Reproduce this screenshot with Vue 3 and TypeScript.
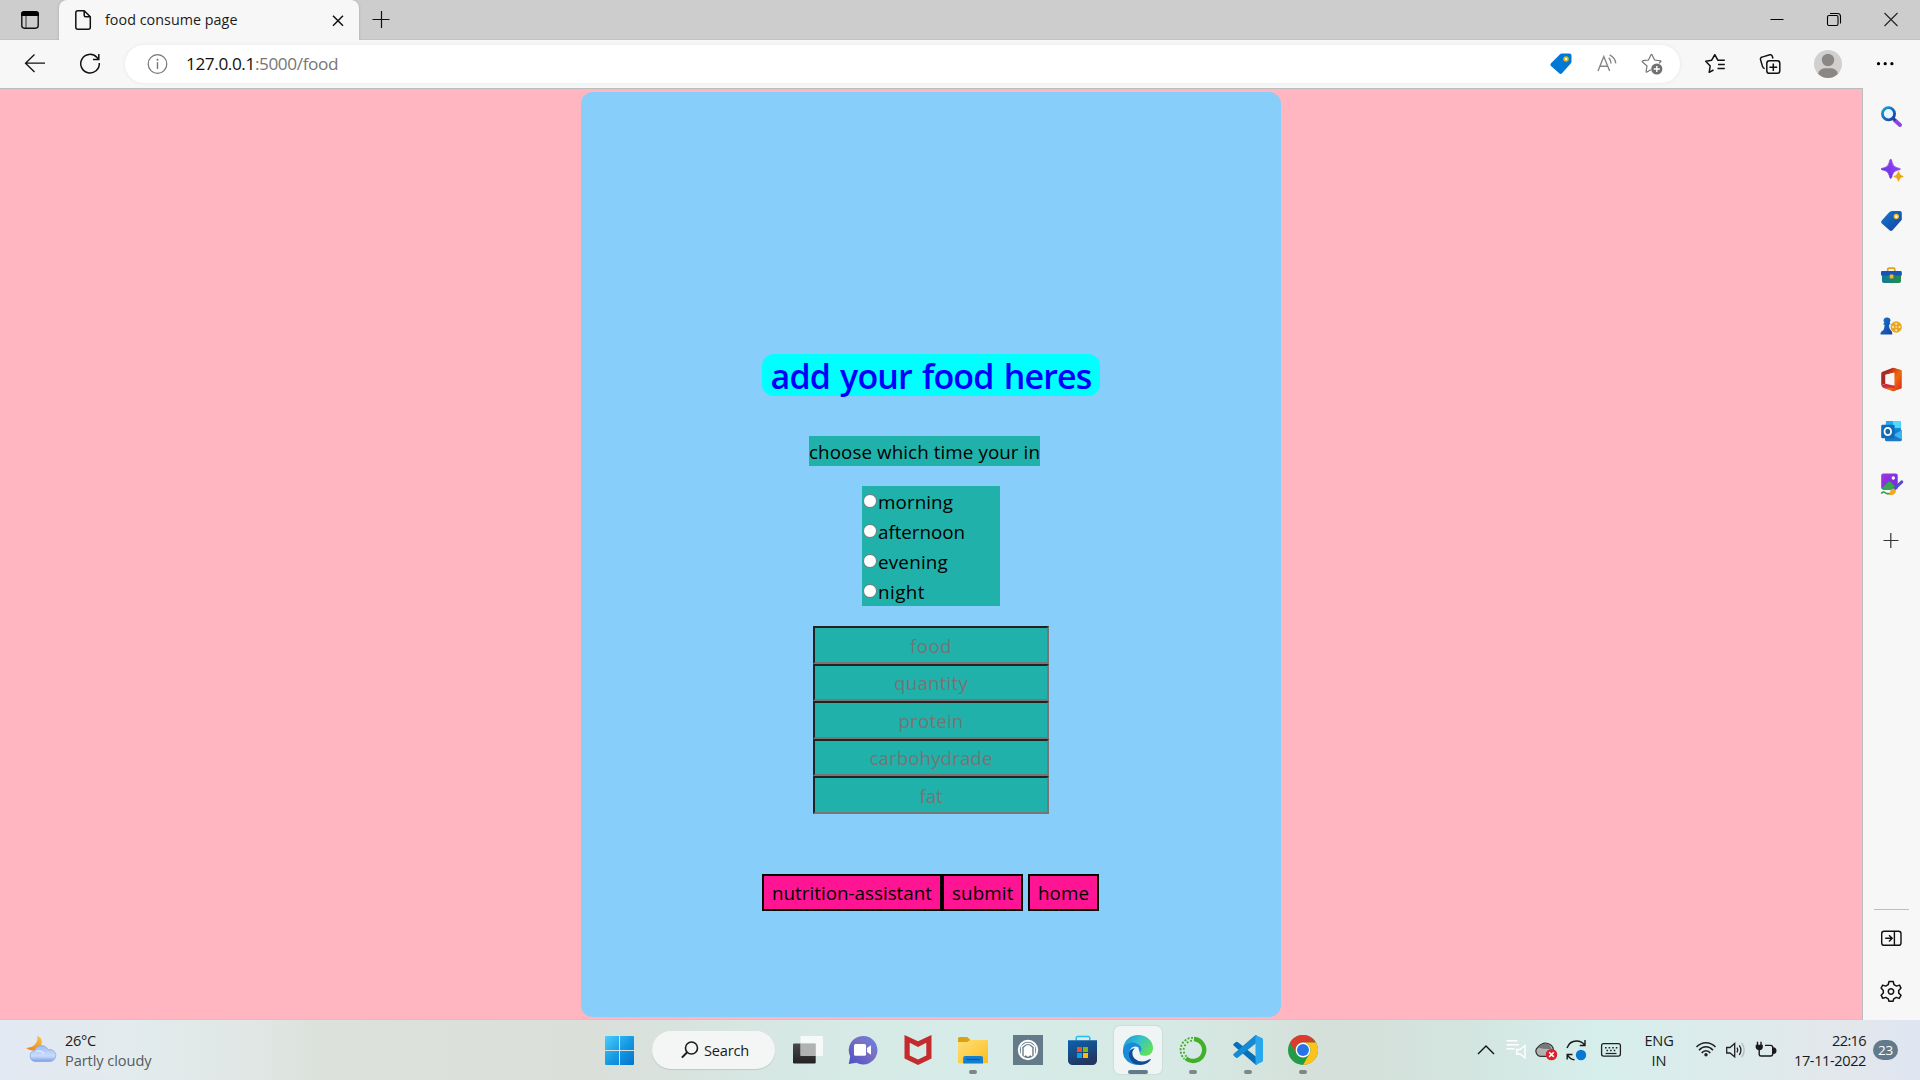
<script setup lang="ts">
import type { Directive } from 'vue'

interface TimeOption { label: string; width: number }
interface Field { name: string; width: number }

const times: TimeOption[] = [
  { label: 'morning', width: 75 },
  { label: 'afternoon', width: 87 },
  { label: 'evening', width: 70 },
  { label: 'night', width: 47 },
]

const fields: Field[] = [
  { name: 'food', width: 42 },
  { name: 'quantity', width: 74 },
  { name: 'protein', width: 65 },
  { name: 'carbohydrade', width: 123 },
  { name: 'fat', width: 23 },
]

// Tracks a label so that its text occupies the given width in pixels.
const vFit: Directive<HTMLElement, number> = {
  mounted(el, binding) {
    const text = el instanceof HTMLInputElement ? el.placeholder : (el.textContent ?? '').trim()
    const ctx = document.createElement('canvas').getContext('2d')
    if (!ctx || !text.length) return
    const style = getComputedStyle(el)
    ctx.font = `${style.fontWeight} ${style.fontSize} ${style.fontFamily}`
    const spacing = (binding.value - ctx.measureText(text).width) / text.length
    el.style.letterSpacing = `${spacing.toFixed(3)}px`
  },
}
</script>

<template>
  <div class="screen">
    <header class="tabs">
      <svg class="workspace" width="40" height="40" viewBox="-20 -20 40 40"><rect x="-8.2" y="-7.8" width="16.4" height="16" rx="2.6" fill="none" stroke="#111" stroke-width="1.4" /><path d="M-9-4V-6a3 3 0 0 1 3-3H6a3 3 0 0 1 3 3v2z" fill="#000" /><path d="M-4-4V8" stroke="#333" stroke-width="1" /></svg>
      <div class="tab">
        <svg width="20" height="40" viewBox="-10 -20 20 40" fill="none" stroke="#111" stroke-width="1.5" stroke-linejoin="round"><path d="M-5.2-9.3H1.2L7.3-3.2V7.3a2 2 0 0 1-2 2H-5.2a2 2 0 0 1-2-2V-7.3a2 2 0 0 1 2-2zM1.2-9V-4.7a1.5 1.5 0 0 0 1.5 1.5H7" /></svg>
        <span class="tab-title"><span v-fit="132.5">food consume page</span></span>
        <svg width="20" height="40" viewBox="-10 -20 20 40" stroke="#111" stroke-width="1.5"><path d="M-5-4.2L5 5.8M5-4.2L-5 5.8" /></svg>
      </div>
      <svg class="new-tab" width="40" height="40" viewBox="-20 -20 40 40" stroke="#111" stroke-width="1.2"><path d="M-8.5-.5H8.5M.5-9V8" /></svg>
      <svg class="win-min" width="40" height="40" viewBox="-20 -20 40 40"><path d="M-6.5-.5H6.5" stroke="#000" stroke-width="1" /></svg>
      <svg class="win-btn" width="40" height="40" viewBox="-20 -20 40 40" fill="none" stroke="#000" stroke-width="1.1"><rect x="-6.5" y="-4.5" width="10.5" height="10" rx="1.5" /><path d="M-4-6.5H3.5a3 3 0 0 1 3 3V3.5" /></svg>
      <svg class="win-btn" width="40" height="40" viewBox="-20 -20 40 40" stroke="#222" stroke-width="1.1"><path d="M-6.5-7L6.5 6M6.5-7L-6.5 6" /></svg>
    </header>

    <nav class="toolbar">
      <svg width="40" height="40" viewBox="-20 -20 40 40" fill="none" stroke="#111" stroke-width="1.3"><path d="M10-.8H-9.5M-.5-9.5L-9.5-.8-.5 8" /></svg>
      <svg class="reload" width="40" height="40" viewBox="-20 -20 40 40" fill="none" stroke="#111" stroke-width="1.5"><path d="M9.3-1A9.3 9.3 0 1 1 6.8-6.7L8.6-4.6M8.8-10V-4.6H3" /></svg>
      <div class="omnibox">
        <svg class="info" width="24" height="24" viewBox="-12.5 -12 24 24"><circle r="9.3" fill="none" stroke="#757575" stroke-width="1.2" /><path d="M0-1.8V5" stroke="#757575" stroke-width="1.4" /><circle cy="-4.3" r="1" fill="#757575" /></svg>
        <span class="url" v-fit="152">127.0.0.1<i>:5000/food</i></span>
        <svg class="o-tag" width="30" height="30" viewBox="-15 -15 30 30"><path d="M1-10.5H8.5a2 2 0 0 1 2 2V-2.5a3 3 0 0 1-1 2.3L1 9.3a2 2 0 0 1-2.8 0L-10 2a2 2 0 0 1 0-2.8L-1.2-9.6A3 3 0 0 1 1-10.5z" fill="#0078d4" /><circle cx="5" cy="-5" r="2" fill="#fff" stroke="#f0b400" stroke-width="1.5" /></svg>
        <svg class="o-read" width="30" height="30" viewBox="-15 -15 30 30" fill="none" stroke="#858585" stroke-width="1.4"><path d="M-9 7L-3.2-7.5 2.7 7M-7 2.2H.8M1.8-6.2Q4-3.6 4-.6M2.7-9.2Q8.8-5.8 8.6-.6" /></svg>
        <svg class="o-star" width="30" height="30" viewBox="-15 -15 30 30"><path d="M-5.5 8.2Q-6 8.3-5.9 7.5L-5 2-9.8-2.3Q-10-3-9-3.3L-3.5-4-1-9.2Q-.5-10 0-9.2L2.6-4 8.5-3.1Q9.3-2.8 8.6-2.2L7-.6M-5.5 8.2L-1 5.8" fill="none" stroke="#757575" stroke-width="1.2" /><circle cx="4.8" cy="5" r="5.6" fill="#707070" /><path d="M1.7 5H7.9M4.8 1.9V8.1" stroke="#fff" stroke-width="1.4" /></svg>
      </div>
      <svg class="fav" width="40" height="40" viewBox="-20 -20 40 40" fill="none" stroke="#111" stroke-width="1.5" stroke-linejoin="round"><path d="M-1.5 6L-5.8 8.3-4.8 2-9.3-2.8-3.3-3.8-.2-9.3 2.8-3.8H9.8M3 .5H9.8M2.5 4.5H9.8" /></svg>
      <svg class="coll" width="40" height="40" viewBox="-20 -20 40 40" fill="none" stroke="#111" stroke-width="1.5"><rect x="-3.2" y="-3.2" width="13" height="12.5" rx="2.6" /><path d="M3.3 -.5V7M-.6 3.2H7.2M3-5.5L2.2-8a2 2 0 0 0-2.4-1.2L-8-6.9A2 2 0 0 0-9.5-4.4L-7.4 2.6Q-6.8 4.5-5.3 4.6" /></svg>
      <svg class="avatar" width="40" height="40" viewBox="-20 -20 40 40"><circle r="14" fill="#d2d0ce" /><circle cy="-4" r="6.2" fill="#8a8785" /><path d="M-10 9.7Q-8 4.4-3.5 4.3H3.5Q8 4.4 10 9.7A14 14 0 0 1-10 9.7z" fill="#8a8785" /></svg>
      <svg class="dots" width="40" height="40" viewBox="-20 -20 40 40"><circle cx="-6.5" cy="-.3" r="1.6" /><circle cx=".2" cy="-.3" r="1.6" /><circle cx="6.9" cy="-.3" r="1.6" /></svg>
    </nav>

    <div class="body">
      <main class="page">
        <form class="card" @submit.prevent>
          <h1><span v-fit="315">add your food heres</span></h1>
          <p class="prompt"><span v-fit="231">choose which time your in</span></p>
          <div class="times">
            <label v-for="t in times" :key="t.label"><input type="radio" name="time" /><span v-fit="t.width">{{ t.label }}</span></label>
          </div>
          <div class="fields">
            <input v-for="f in fields" :key="f.name" v-fit="f.width" type="text" :placeholder="f.name" />
          </div>
          <div class="actions">
            <button type="button" class="b-nutrition"><span v-fit="160">nutrition-assistant</span></button>
            <button type="submit" class="b-submit"><span v-fit="61.5">submit</span></button>
            <button type="button" class="b-home"><span v-fit="51">home</span></button>
          </div>
        </form>
      </main>

      <aside class="sidebar">
        <svg width="40" height="40" viewBox="-20 -20 40 40"><path d="M3.5 4L9 9" stroke="#8a45e0" stroke-width="4" stroke-linecap="round" /><path d="M2 2L4.5 4.5" stroke="#2a3b90" stroke-width="2" /><circle cx="-2.5" cy="-2.3" r="6.1" fill="#e8f6fd" stroke="url(#g-mag)" stroke-width="2.8" /></svg>
        <svg width="40" height="40" viewBox="-20 -20 40 40"><path d="M-.3-10Q.7-9.6 1.2-6.5 2-1.8 6.5-1.1 9.2-.6 9.5 0 9 .8 6.5 1.2 2 2 1.2 6.3.7 9.3-.2 9.5-1.2 9.2-1.8 6.3-2.6 2-7 1.2-9.7.8-10 0-9.7-.7-7-1.1-2.6-1.8-1.8-6.5-1.2-9.7-.3-10z" fill="url(#g-spark)" stroke="url(#g-spark)" stroke-width=".8" /><path d="M7.5 2.8Q8.3 6.8 12 7.5 8.3 8.3 7.5 12 6.8 8.3 3 7.5 6.8 6.8 7.5 2.8z" fill="#eba914" stroke="#eba914" stroke-width="1.2" stroke-linejoin="round" /></svg>
        <svg width="40" height="40" viewBox="-20 -20 40 40"><path d="M1-10H8.8a2 2 0 0 1 2 2V-1.2L1.5 9.2a2.2 2.2 0 0 1-3 0L-9.4 2.3a2 2 0 0 1 0-2.6L-2-8.5Q-.8-10 1-10z" fill="url(#g-tag)" /><circle cx="5.3" cy="-4.5" r="2" fill="#fff" stroke="#f3bb20" stroke-width="1.4" /></svg>
        <svg width="40" height="40" viewBox="-20 -21 40 40"><path d="M-3.3-3V-5.5a1.3 1.3 0 0 1 1.3-1.3H2.5a1.3 1.3 0 0 1 1.3 1.3V-3" fill="none" stroke="#e0a02a" stroke-width="1.8" /><path d="M-9 0H10V6a2 2 0 0 1-2 2H-7a2 2 0 0 1-2-2z" fill="url(#g-box)" /><path d="M-8.5-4H9.5a1.3 1.3 0 0 1 1.3 1.3V.5H-10V-2.7A1.3 1.3 0 0 1-8.5-4z" fill="#1654b8" /><rect x="-1.3" y="-.5" width="3.7" height="4" rx=".8" fill="#f3b435" /></svg>
        <svg width="40" height="40" viewBox="-20 -20 40 40"><circle cx="5.2" cy="1" r="5.7" fill="#e8a621" /><g fill="#fff1c0"><circle cx="5.2" cy="-2.3" r="1" /><circle cx="5.2" cy="4.3" r="1" /><circle cx="2" cy="1" r="1" /><circle cx="8.5" cy="1" r="1" /><circle cx="5.2" cy="1" r=".8" /></g><path d="M-4-8.5a3 3 0 0 1 2.7 5L-.5-1.5H-2Q-2 3 0 4.5 1.5 5.5 1.3 8.5H-10.5Q-10.8 5.5-8 4.5-6.5 3-6.5-1.5H-8L-6.7-3.5A3 3 0 0 1-4-8.5z" fill="url(#g-tag)" /></svg>
        <svg width="40" height="40" viewBox="-20 -20.8 40 40"><path d="M2-12L10.5-9.5V8.5L2 11.5z" fill="#e24a10" /><path d="M2-12L-8.5-8a2 2 0 0 0-1.3 2V5.5L-5.5 4V-5L3-7.2z" fill="#a62b24" /><path d="M2-12L10.5-9.5V8.5L2 11.5-8 7.5 3.5 6V-7.2L-5.5-5z" fill="url(#g-off)" fill-rule="evenodd" /><path d="M-5.5-5L3.5-7.2V6L-5.5 4z" fill="#f9f5f5" /><path d="M-9.8 5.8L-5.5 4 3.5 6V8L-7.5 7.5 2 11.5-8 8z" fill="#d12a3e" /></svg>
        <svg width="40" height="40" viewBox="-20 -20 40 40"><path d="M-5-10H8.5a1.3 1.3 0 0 1 1.3 1.3V3H-6z" fill="#28a8ea" /><path d="M2-10H9.8V-3H2z" fill="#50d9ff" /><path d="M2-3H9.8V4H2z" fill="#1688d4" /><path d="M-6 1L11-1V8.5a1.7 1.7 0 0 1-1.7 1.7H-4.5A1.5 1.5 0 0 1-6 8.7z" fill="#1a7ac8" /><path d="M11-1V8.5L2 4z" fill="#39b7f1" /><rect x="-9.8" y="-6.3" width="13.4" height="13.6" rx="1.4" fill="#0f6cbd" /><ellipse cx="-3.2" cy=".5" rx="3.3" ry="3.7" fill="none" stroke="#fff" stroke-width="1.8" /></svg>
        <svg width="40" height="40" viewBox="-20 -20 40 40"><rect x="-9.8" y="-10.5" width="16.5" height="16" rx="2" fill="url(#g-pic)" /><path d="M-9 4L-3-1.8a2 2 0 0 1 2.8 0L6 4.5 4 6H-8z" fill="#35a851" /><circle cx="2.3" cy="-6" r="1.7" fill="#fff" /><path d="M-9.8 9.5Q-7.5 7-6 8.5T-3 9.5L0 10" fill="none" stroke="#2b9a48" stroke-width="1.5" /><path d="M2.8 5.3L10.8-2.2" stroke="#5748d8" stroke-width="3" stroke-linecap="round" /><path d="M-1.5 10Q-.8 4.5 3 4.5L5 6.5Q5 11-1.5 11.3z" fill="#efa925" /></svg>
        <svg class="plus" width="40" height="40" viewBox="-20 -20 40 40" stroke="#333" stroke-width="1.2"><path d="M-7.5.5H7.5M-.2-7V8" /></svg>
        <div class="rule"></div>
        <svg class="panel" width="40" height="40" viewBox="-20 -20 40 40" fill="none" stroke="#111" stroke-width="1.4"><rect x="-9.3" y="-6.7" width="19.3" height="14" rx="2.4" /><path d="M3.4-6.7V7.3M-5.8.3H.5M-2-2.8L1.2.3-2 3.4" /></svg>
        <svg class="gear" width="40" height="40" viewBox="-20 -20 40 40" fill="none" stroke="#111" stroke-width="1.5" stroke-linejoin="round"><path d="M-2-9.5H2.2L3-6.3 5.5-4.9 8.5-5.9 10-2.9 7.7-.5V2.1L10 4.3 8.2 7.4 5.2 6.4 2.8 7.8 2 10.3H-2L-2.8 7.8-5.2 6.4-8.2 7.3-9.9 4.2-7.7 2V-.5L-9.9-3-8.3-5.9-5.3-4.9-2.8-6.3z" /><circle cx="0" cy=".5" r="2.7" /></svg>
      </aside>
    </div>

    <footer class="taskbar">
      <svg class="weather" width="32" height="32" viewBox="-16 -16 32 32"><path d="M-4-13.5Q4-9-.5-3-6 5-15-1-8-1.5-5.3-5.5-2.5-9.5-4-13.5z" fill="url(#g-moon)" /><path d="M-6 12.5a5.6 5.6 0 0 1-.5-11Q-4.2-3.5.7-3.5 5-3.5 7 .8A6 6 0 1 1 8.5 12.5z" fill="url(#g-cloud)" stroke="#82a2e2" stroke-width=".7" /><path d="M-5 2.5Q0 .5 3 5" fill="none" stroke="#dfebff" stroke-width="1.4" /></svg>
      <div class="weather-text"><b v-fit="31">26°C</b><span v-fit="86.5">Partly cloudy</span></div>

      <svg class="start" width="30" height="30" viewBox="0 0 30 30" fill="url(#g-win)"><path d="M0 1a1 1 0 0 1 1-1H14V14H0zM15 0H28a1 1 0 0 1 1 1V14H15zM0 15H14V29H1a1 1 0 0 1-1-1zM15 15H29V28a1 1 0 0 1-1 1H15z" /></svg>
      <div class="search">
        <svg width="18" height="18" viewBox="0 0 18 18" fill="none" stroke="#1c1c1c" stroke-width="1.6"><circle cx="10.5" cy="7" r="6" /><path d="M6.2 11.3L.9 16.6" stroke-width="2" /></svg>
        <span v-fit="45">Search</span>
      </div>

      <div class="apps">
        <div class="app"><svg width="40" height="40" viewBox="-20 -20 40 40"><rect x="-15" y="-6.5" width="22.7" height="20" rx="1.2" fill="url(#g-dark)" /><rect x="-7.5" y="-14" width="22.5" height="20" rx="1" fill="#fff" opacity=".75" /><path d="M-7.5-6.5H7.7V6H-7.5z" fill="#a9abaa" opacity=".8" /></svg></div>
        <div class="app"><svg width="40" height="40" viewBox="-20 -20 40 40"><path d="M0-14a14.2 14.2 0 1 1-6.5 26.7L-14.3 14-12.8 6.5A14.2 14.2 0 0 1 0-14z" fill="url(#g-chat)" /><rect x="-9" y="-6" width="12" height="11.8" rx="1.5" fill="#fff" /><path d="M4-2L8-4.8V4.8L4 2z" fill="#fff" /></svg></div>
        <div class="app"><svg width="40" height="40" viewBox="-20 -20 40 40"><path d="M-13.5-15L0-8.8 13.5-15V8.5L0 15-13.5 8.5zM-8.3-7.3V5.5L0 9.5 8.3 5.5V-7.3L0-3z" fill="#c42b2c" fill-rule="evenodd" /></svg></div>
        <div class="app"><svg width="40" height="40" viewBox="-20 -20 40 40"><path d="M-15-11.5A1.5 1.5 0 0 1-13.5-13H-5.8L-2.6-10V-5H-15z" fill="#dda010" /><path d="M-15-8H-6L-2.5-10H13.8A1.2 1.2 0 0 1 15-8.8V12.3a1 1 0 0 1-1 1H-15z" fill="url(#g-fold)" /><path d="M-9.8 13.4V8a2 2 0 0 1 2-2H8a2 2 0 0 1 2 2V13.4z" fill="#137fd0" /><path d="M-6.5 9.5H6.5" stroke="#07579c" stroke-width="1.2" /></svg><i class="run"></i></div>
        <div class="app"><svg width="40" height="40" viewBox="-20 -20 40 40"><rect x="-15" y="-15" width="30" height="30" fill="#627a89" /><circle r="9.2" fill="none" stroke="#fff" stroke-width="2" /><path d="M-6.4 6.5V-3.3L-2-6.6H2L6.4-3.3V6.5" fill="none" stroke="#fff" stroke-width="1.5" /><path d="M-4.3-2.2L-1.5-4.8H1.5L4.3-2.2V6.8L2.2 5.2 0 7-2.2 5.2-4.3 6.8z" fill="#fff" /></svg></div>
        <div class="app"><svg width="40" height="40" viewBox="-20 -20 40 40"><path d="M-6.8-9.5V-12a1.5 1.5 0 0 1 1.5-1.5H5.3A1.5 1.5 0 0 1 6.8-12V-9.5" fill="none" stroke="#23bdf2" stroke-width="1.5" /><path d="M-15-9.8H14V10.5A4.5 4.5 0 0 1 9.5 15H-10.5A4.5 4.5 0 0 1-15 10.5z" fill="url(#g-store)" /><path d="M-6-3H-1V2H-6z" fill="#f25022" /><path d="M0-3H5V2H0z" fill="#7fba00" /><path d="M-6 3H-1V8H-6z" fill="#00a4ef" /><path d="M0 3H5V8H0z" fill="#ffb900" /></svg></div>
        <div class="app active"><svg width="40" height="40" viewBox="-20 -20 40 40"><path d="M-15-1C-14-10-7.5-15 0-15 9-15 15-9 15-2 15 3 11.5 5.8 7 5.8 3 5.8.8 4.3 2 2.5 4.5-1 2-6.5-4-7-10-7.5-14-4-15-1z" fill="url(#g-edge)" /><path d="M-15 0C-14.5-5-9.5-7.8-5-7.5 0-7.2 3.5-4 3.5-.5 3.4 1.2 2 1.8 2 3.2L.2-2.8Q-5-5-8-.3-10 5-5 11.5 0 15.5 2 15-9 15.5-14 7-15.5 3-15 0z" fill="#168bd9" /><path d="M-3.2-2Q-8 3-3.5 8.5 2 13.5 9.5 10.2 12.3 8.8 12.7 9 13.2 9.3 12 10.7 8 15 1.5 15-7 14.5-9 6-10-1-3.2-2z" fill="#114d97" /></svg><i class="run"></i></div>
        <div class="app"><svg width="40" height="40" viewBox="-20 -20 40 40" fill="none" stroke="#43b02a"><path d="M1-11A11 11 0 1 1-7 8.3" stroke-width="4.4" /><path d="M0-12.2A12.2 12.2 0 0 0-8.5 9" stroke-width="1.8" stroke-dasharray="2 1.5" /><path d="M-1-9.3A9.3 9.3 0 0 0-6.3 6.8" stroke-width="1.8" stroke-dasharray="1.8 2" /></svg><i class="run"></i></div>
        <div class="app"><svg width="40" height="40" viewBox="-20 -20 40 40"><path d="M-14-6.5L-12-8Q-11-8.5-10-7.7L9 7.5V14.5L8 15-14.5-4.5Q-15.3-5.5-14-6.5z" fill="#0870b8" /><path d="M-14 6L-12 7.7Q-11 8.2-10 7.5L9-7.5V-14.5L7.5-15-14.5 4Q-15.3 5-14 6z" fill="#168bd1" /><path d="M7.5-15L14-12a1.8 1.8 0 0 1 1 1.6V10.2A1.8 1.8 0 0 1 14 12L7.5 15z" fill="#29a8ee" /></svg><i class="run"></i></div>
        <div class="app"><svg width="40" height="40" viewBox="-20 -20 40 40"><circle r="15" fill="#249b47" /><path d="M-13-7.5A15 15 0 0 1 13-7.5H0A7.5 7.5 0 0 0-6.5 3.8z" fill="#de3b2f" /><path d="M13-7.5A15 15 0 0 1 0 15L6.5 3.8A7.5 7.5 0 0 0 0-7.5z" fill="#fcc31a" /><circle r="7.4" fill="#fff" /><circle r="6" fill="#2a72e8" /></svg><i class="run"></i></div>
      </div>

      <div class="tray">
        <svg width="30" height="40" viewBox="-15 -20 30 40" fill="none" stroke="#111" stroke-width="1.4"><path d="M-8 4L0-4 8 4" /></svg>
        <svg width="30" height="40" viewBox="-15 -20 30 40" fill="none" stroke="#fff" stroke-width="1.4"><path d="M-9.5-9.3H1.5M-9.5-5.3H3M-9.5-1.3H-1.5M.8-.5H4L9-4.5V7.8L4 4H.8z" /></svg>
        <svg width="30" height="40" viewBox="-15 -20 30 40"><path d="M-5 6.3A5 5 0 0 1-8.3-2.5Q-3.5-8 1.8-6.5 7-5 7.5 0L3 6.3z" fill="#b0b2b3" stroke="#333" stroke-width="1.2" /><path d="M-8-2.5Q-2-8 3-5.8L5.5-1Q-2-.5-8-2.5z" fill="#777" /><circle cx="5.5" cy="4.6" r="5.7" fill="#d8232f" /><path d="M3.2 2.3L7.8 6.9M7.8 2.3L3.2 6.9" stroke="#fff" stroke-width="1.6" /></svg>
        <svg width="30" height="40" viewBox="-15 -20 30 40" fill="none" stroke="#1a1a1a" stroke-width="1.4"><path d="M-9-2Q-6.5-9 .5-9 6-9 9-4.5M9-10V-4.5H3.8M-8.8 9.5V4.5H-3.5M-8.8 4.7Q-6 9.6-1.5 9.8" /><circle cx="5" cy="5" r="5.2" fill="#0878d4" stroke="none" /></svg>
        <svg class="keyb" width="30" height="40" viewBox="-15 -20 30 40" fill="none" stroke="#222" stroke-width="1.3"><rect x="-9.4" y="-6.4" width="18.8" height="12.5" rx="2" /><path d="M-6-2.3H7" stroke-dasharray="1.6 2" stroke-width="1.5" /><path d="M-4.5.6H6" stroke-dasharray="1.6 2" stroke-width="1.5" /><path d="M-5.5 3.5H5.5" stroke-width="1.2" /></svg>
        <div class="lang"><span v-fit="29">ENG</span><span v-fit="15">IN</span></div>
        <svg class="wifi" width="30" height="40" viewBox="-15 -20 30 40" fill="none" stroke="#222" stroke-width="1.5"><path d="M-9.5-3Q-5.5-7.3 0-7.3T9.5-3M-7 .2Q-4-3.3 0-3.3T7 .2M-4.3 3Q-2.7.7 0 .7T4.3 3" /><circle cy="4.7" r="1.7" fill="#222" stroke="none" /></svg>
        <svg width="30" height="40" viewBox="-15 -20 30 40" fill="none" stroke="#222" stroke-width="1.3"><path d="M-9.3-2.5H-6L-1.3-6.5V6.8L-6 3H-9.3z" /><path d="M1-2.3Q2.5 0 1 2.5M3.3-4.7Q6.5 0 3.3 5" /><path d="M5.8-7Q10.6 0 5.8 7.2" stroke="#aebcbc" /></svg>
        <svg width="32" height="40" viewBox="-15 -20 32 40" fill="none" stroke="#1a1a1a" stroke-width="1.4"><path d="M-8.5-8.2V-4M-5-8.2V-4" /><path d="M-10.3-5.2H-3.2V-2.5Q-3.5 0-6.7.3-10-.2-10.3-2.5z" fill="#1a1a1a" stroke="none" /><path d="M-6.8 0V4.5Q-6.8 6-5 6H4.5Q6.7 6 6.7 3.8V-2.5Q6.7-4.6 4.5-4.6H-1" /><path d="M7-2Q9.8-1.8 9.8.7T7 3.3z" fill="#1a1a1a" /></svg>
        <div class="clock"><span v-fit="34">22:16</span><span v-fit="72">17-11-2022</span></div>
        <div class="count"><span v-fit="15">23</span></div>
      </div>
    </footer>

    <svg class="defs" width="0" height="0">
      <defs>
        <linearGradient id="g-mag" x1="0" y1="0" x2="1" y2="1"><stop stop-color="#1aa0e0" /><stop offset="1" stop-color="#153f9c" /></linearGradient>
        <linearGradient id="g-spark" x1="0" y1="1" x2="1" y2="0"><stop stop-color="#5b2be0" /><stop offset="1" stop-color="#a44af5" /></linearGradient>
        <linearGradient id="g-tag" x1="0" y1="0" x2="1" y2="1"><stop stop-color="#1478cf" /><stop offset="1" stop-color="#1443a2" /></linearGradient>
        <linearGradient id="g-box"><stop stop-color="#0f7a9c" /><stop offset="1" stop-color="#258d45" /></linearGradient>
        <linearGradient id="g-off" x1="0" y1="0" x2="1" y2=".8"><stop offset=".25" stop-color="#b52c22" /><stop offset=".65" stop-color="#f06a0a" /><stop offset="1" stop-color="#d9361c" /></linearGradient>
        <linearGradient id="g-pic" x1="0" y1="0" x2="1" y2="1"><stop stop-color="#a336df" /><stop offset="1" stop-color="#6a2ae0" /></linearGradient>
        <linearGradient id="g-moon" x1="1" y1="0" x2="0" y2="1"><stop stop-color="#fbc43d" /><stop offset="1" stop-color="#ef7d1c" /></linearGradient>
        <linearGradient id="g-cloud" x1="0" y1="0" x2="0" y2="1"><stop stop-color="#9dbcf3" /><stop offset=".65" stop-color="#c9dcfb" /><stop offset="1" stop-color="#7ba0e6" /></linearGradient>
        <linearGradient id="g-win" x1="0" y1="0" x2="1" y2="1"><stop stop-color="#4ccdfb" /><stop offset=".5" stop-color="#179be4" /><stop offset="1" stop-color="#0372cf" /></linearGradient>
        <linearGradient id="g-dark" x1="0" y1="0" x2="0" y2="1"><stop stop-color="#4a4a4a" /><stop offset="1" stop-color="#222" /></linearGradient>
        <linearGradient id="g-chat" x1="1" y1="0" x2="0" y2="1"><stop stop-color="#5f86e8" /><stop offset=".4" stop-color="#7b70c4" /><stop offset="1" stop-color="#4c50c8" /></linearGradient>
        <linearGradient id="g-fold" x1="0" y1="0" x2="1" y2="1"><stop stop-color="#ffe07a" /><stop offset="1" stop-color="#fbbd1b" /></linearGradient>
        <linearGradient id="g-store" x1="0" y1="0" x2=".4" y2="1"><stop stop-color="#0a63b2" /><stop offset="1" stop-color="#23365f" /></linearGradient>
        <linearGradient id="g-edge" x1="0" y1="0" x2="1" y2=".6"><stop stop-color="#1b8fd6" /><stop offset=".5" stop-color="#35c1cf" /><stop offset="1" stop-color="#5fe05c" /></linearGradient>
      </defs>
    </svg>
  </div>
</template>

<style>
body { margin: 0; overflow: hidden; }
</style>

<style scoped>
.screen {
  width: 1920px;
  height: 1080px;
  display: flex;
  flex-direction: column;
  font-family: "Open Sans", "Noto Sans", sans-serif;
  overflow: hidden;
}
svg { display: block; flex: none; }
span { white-space: nowrap; }

.tabs {
  height: 40px;
  flex: none;
  display: flex;
  background: #cdcdcd;
  box-shadow: inset 0 -1px #c2c2c2;
}
.workspace { margin-left: 10px; }
.tab {
  position: relative;
  display: flex;
  width: 300px;
  height: 40px;
  margin-left: 9px;
  padding: 0 11px 0 14px;
  box-sizing: border-box;
  background: #f7f7f7;
  border-radius: 8px 8px 0 0;
  box-shadow: 0 0 3px rgba(0, 0, 0, 0.18);
}
.tab-title {
  flex: 1;
  padding-left: 12px;
  font-size: 14.3px;
  line-height: 39px;
  color: #1b1b1b;
}
.new-tab { margin-left: 2px; }
.win-min { margin-left: auto; margin-right: 17px; }
.win-btn { margin-right: 17px; }
.win-btn:last-child { margin-right: 9px; }

.toolbar {
  position: relative;
  height: 48px;
  flex: none;
  display: flex;
  align-items: center;
  padding-left: 15px;
  background: #f7f7f7;
}
.reload { margin-left: 15px; }
.omnibox {
  width: 1555px;
  height: 38px;
  margin-left: 15px;
  display: flex;
  align-items: center;
  background: #fff;
  border-radius: 19px;
  box-shadow: 0 0 4px rgba(0, 0, 0, 0.07);
}
.info { margin-left: 20px; }
.url {
  margin-left: 17px;
  margin-right: auto;
  font-size: 17.2px;
  line-height: 38px;
  color: #111;
}
.url i { font-style: normal; color: #767676; }
.o-tag { margin-right: 16px; }
.o-read { margin-right: 15px; }
.o-star { margin-right: 13px; }
.fav { margin-left: 15px; }
.coll { margin-left: 15px; }
.avatar { margin-left: 18px; }
.dots { margin-left: 17px; }

.body { height: 932px; flex: none; display: flex; }
.page {
  width: 1863px;
  box-sizing: border-box;
  border-top: 1px solid #bcbcbc;
  border-right: 1px solid #bcbcbc;
  background: #ffb6c1;
  display: flex;
  justify-content: center;
  padding-top: 3px;
  box-shadow: inset 0 -1px #d9bfc4;
}
.card {
  width: 700px;
  height: 925px;
  box-sizing: border-box;
  padding-top: 262px;
  display: flex;
  flex-direction: column;
  align-items: center;
  background: #87cefa;
  border-radius: 12px;
  font-size: 18.8px;
  line-height: 30px;
  color: #000;
}
h1 {
  width: 338px;
  height: 42px;
  margin: 0;
  text-align: center;
  background: #0ff;
  border-radius: 12px;
  font-size: 34px;
  line-height: 44px;
  font-weight: 600;
  word-spacing: 2px;
  color: #00f;
}
.prompt {
  width: 231px;
  height: 30px;
  margin: 40px 13px 0 0;
  background: #20b2aa;
  white-space: nowrap;
  line-height: 32px;
}
.times {
  width: 138px;
  height: 120px;
  margin-top: 20px;
  background: #20b2aa;
  line-height: 32px;
}
.times label { display: flex; height: 30px; }
.times input {
  appearance: none;
  width: 14px;
  height: 14px;
  margin: 8px 1px 0 1px;
  box-sizing: border-box;
  border: 1px solid #767676;
  border-radius: 50%;
  background: #fff;
}
.fields {
  width: 236px;
  height: 188px;
  margin-top: 20px;
  display: flex;
  flex-direction: column;
}
.fields input {
  width: 236px;
  height: 37.5px;
  padding: 2px 0 0;
  box-sizing: border-box;
  border: 2px solid;
  border-color: #222 #767676 #767676 #222;
  background: #20b2aa;
  text-align: center;
  font-family: inherit;
  font-size: 18.8px;
}
.fields input::placeholder { color: #757575; }
.actions { display: flex; width: 337px; margin: 60px 1px 0 0; }
.actions button {
  height: 37px;
  padding: 0 8px;
  box-sizing: border-box;
  border: 2px solid #000;
  background: #ff1493;
  font: inherit;
  color: #000;
}
.b-nutrition { width: 180px; }
.b-submit { width: 81px; }
.b-home { width: 71px; margin-left: 5px; }

.sidebar {
  width: 57px;
  height: 932px;
  box-sizing: border-box;
  padding: 8px 0 0 8px;
  background: #f7f7f7;
}
.sidebar svg { margin-bottom: 12px; }
.sidebar svg:nth-child(odd) { margin-bottom: 13px; }
.sidebar .plus { margin: 16px 0 0; }
.rule { width: 35px; height: 1px; margin: 349px 0 0 3px; background: #bdbdbd; }
.sidebar .panel { margin: 8px 0 0; }
.sidebar .gear { margin: 12px 0 0; }

.taskbar {
  height: 60px;
  flex: none;
  display: flex;
  align-items: center;
  background: linear-gradient(90deg, #e2e9f3 0, #e2ebed 130px, #e0e7e5 250px, #dce1db 320px, #dadfda 600px, #d6e8e4 780px, #d6ece8 960px, #d6e9e4 1180px, #d5dfd9 1330px, #d3e4df 1460px, #d6efec 1600px, #dcebeb 1720px, #e3e7ec 1850px, #dfe6f2 1920px);
  font-size: 14.6px;
  line-height: 20px;
  color: #1a1a1a;
}
.weather { margin-left: 25px; margin-top: -2px; }
.weather-text { width: 100px; margin-left: 8px; display: flex; flex-direction: column; }
.weather-text b { font-weight: 400; }
.weather-text span { color: #555b5d; }
.start { margin-left: 440px; margin-top: 2px; }
.search {
  width: 123px;
  height: 38px;
  margin-left: 17px;
  box-sizing: border-box;
  padding-left: 29px;
  display: flex;
  align-items: center;
  gap: 5px;
  border-radius: 19px;
  background: #f3f6f5;
  box-shadow: 0 1px 1px rgba(0, 0, 0, 0.12);
}
.apps { display: flex; margin-left: 5px; }
.app {
  position: relative;
  width: 48px;
  height: 48px;
  margin: 0 3.5px;
  display: flex;
  justify-content: center;
  align-items: center;
  border-radius: 6px;
}
.active { background: #eef5f4; box-shadow: 0 0 1px 1px rgba(0, 0, 0, 0.05); }
.run {
  position: absolute;
  bottom: 0;
  left: 20px;
  width: 8px;
  height: 4px;
  border-radius: 2px;
  background: #7f8685;
}
.active .run { left: 14px; width: 20px; background: #627a89; }
.tray { display: flex; align-items: center; margin-left: 141px; }
.keyb { margin-left: 5px; }
.lang { width: 36px; margin-left: 15px; display: flex; flex-direction: column; align-items: center; }
.wifi { margin-left: 14px; }
.clock { width: 83px; display: flex; flex-direction: column; align-items: flex-end; }
.clock, .lang { position: relative; top: -0.5px; }
.count {
  width: 25px;
  height: 20px;
  margin-left: 7px;
  border-radius: 10px;
  background: #627a89;
  color: #fff;
  font-size: 13.5px;
  text-align: center;
}
.defs { position: absolute; }
</style>
